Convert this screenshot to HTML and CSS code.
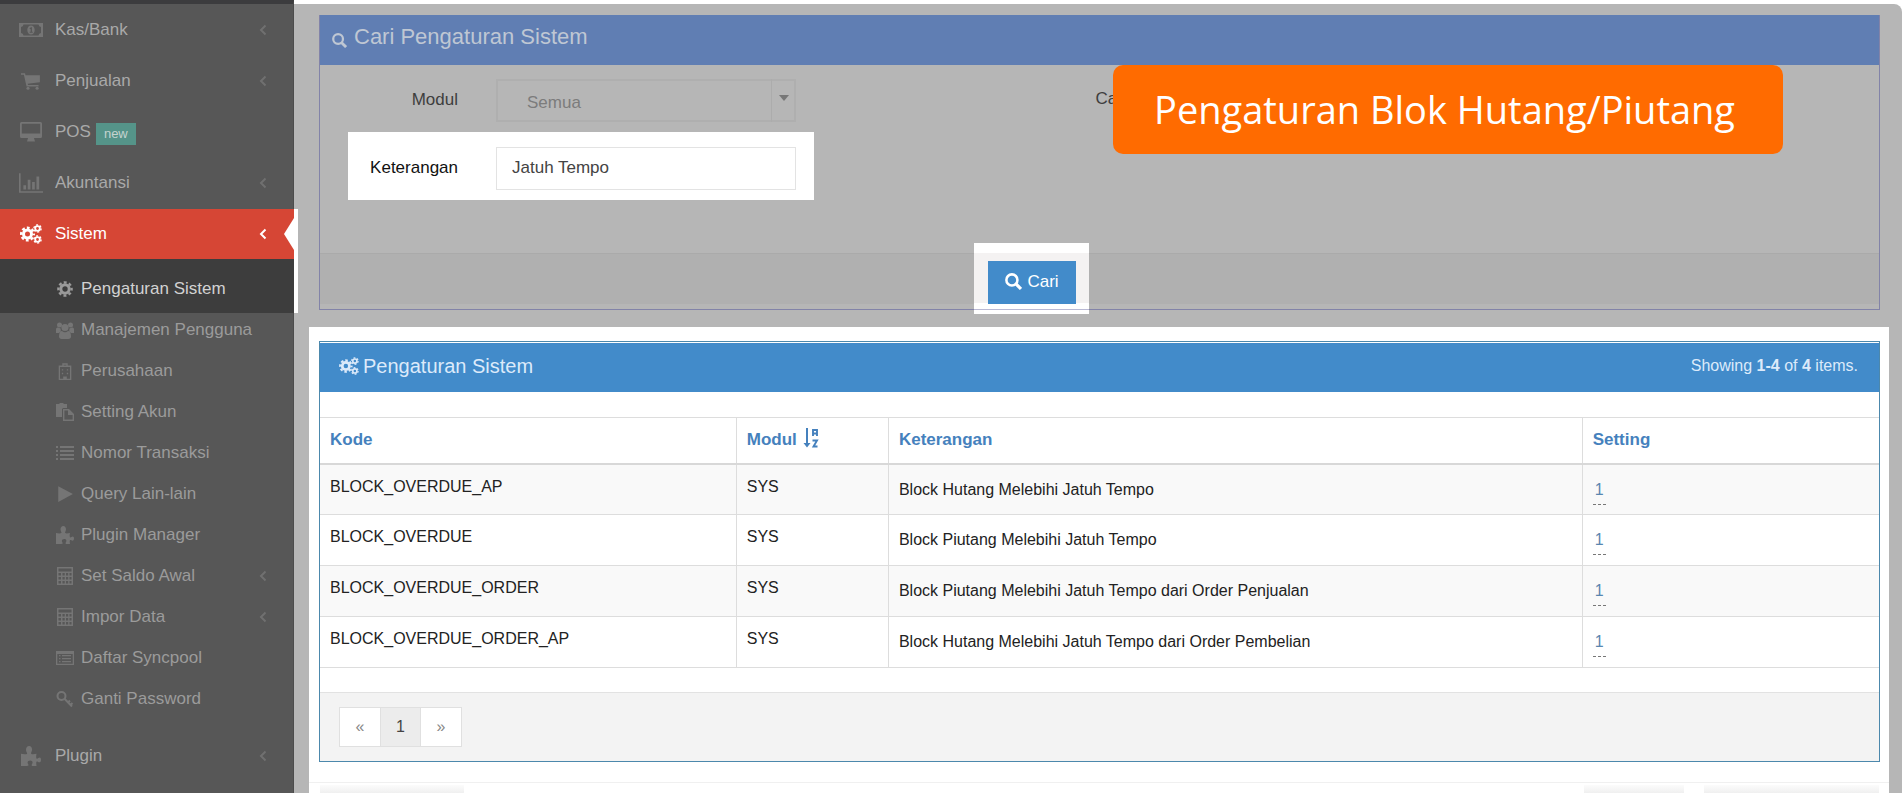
FILE: index.html
```html
<!DOCTYPE html>
<html lang="id">
<head>
<meta charset="utf-8">
<title>Pengaturan Sistem</title>
<link rel="stylesheet" href="styles.css">
</head>
<body>
<svg class="sprite" aria-hidden="true">
  <symbol id="i-money" viewBox="0 0 24 18"><path fill-rule="evenodd" d="M0 2h24v14H0zM2 6v6a3 3 0 0 1 2.500 2.500h15A3 3 0 0 1 22 12V6a3 3 0 0 1-2.500-2.500h-15A3 3 0 0 1 2 6z"/><path fill-rule="evenodd" d="M12 4.500c2.200 0 3.700 2 3.700 4.500s-1.500 4.500-3.700 4.500S8.300 11.500 8.300 9s1.500-4.500 3.700-4.500zM10.500 7.500l.6.700.6-.4v3h-1v1h3v-1h-.8V6.300h-1z"/></symbol>
  <symbol id="i-cart" viewBox="0 0 20 18"><path d="M1 2h3.600l.5 1.800H18v6.300L7 11.400l.3 1.200h9.500v1.300H6L3.600 3.400H1z"/><circle cx="7.300" cy="15.500" r="1.400"/><circle cx="15.500" cy="15.500" r="1.400"/></symbol>
  <symbol id="i-desktop" viewBox="0 0 22 20"><path fill-rule="evenodd" d="M1.500 0h19A1.500 1.500 0 0 1 22 1.500v13a1.500 1.500 0 0 1-1.500 1.500H14l1 3.500H7L8 16H1.500A1.500 1.500 0 0 1 0 14.500v-13A1.500 1.500 0 0 1 1.500 0zM1.800 1.800v9.700h18.400V1.800z"/></symbol>
  <symbol id="i-chart" viewBox="0 0 22 18"><path d="M0 0h1.500v16.500H22V18H0zM4 11h2.500v4H4zM8 6h2.500v9H8zM12 8h2.500v7H12zM16 3h2.500v12H16z"/></symbol>
  <symbol id="i-gear" viewBox="0 0 16 16"><g fill="none" stroke="currentColor"><circle cx="8" cy="8" r="4.200" stroke-width="3"/><circle cx="8" cy="8" r="6.600" stroke-width="2.400" stroke-dasharray="2.900 2.284" stroke-dashoffset="1.450"/></g></symbol>
  <symbol id="i-gears" viewBox="0 0 22 20"><g fill="none" stroke="currentColor"><circle cx="7.500" cy="10" r="4" stroke-width="3"/><circle cx="7.500" cy="10" r="6.300" stroke-width="2.400" stroke-dasharray="2.800 2.148" stroke-dashoffset="1.400"/><circle cx="17.500" cy="4.500" r="2.300" stroke-width="1.800"/><circle cx="17.500" cy="4.500" r="3.600" stroke-width="1.400" stroke-dasharray="2 1.770"/><circle cx="17.500" cy="15.500" r="2.300" stroke-width="1.800"/><circle cx="17.500" cy="15.500" r="3.600" stroke-width="1.400" stroke-dasharray="2 1.770"/></g></symbol>
  <symbol id="i-users" viewBox="0 0 18 18"><circle cx="3.500" cy="4" r="2.500"/><circle cx="14.500" cy="4" r="2.500"/><circle cx="9" cy="6.500" r="3.600"/><path d="M0 12V8.500C0 7 1 6.500 2 6.500l2.600 1L4.800 10 3 12zM18 12V8.500c0-1.500-1-2-2-2l-2.600 1-.2 2.500L15 12zM3 15.500c0-3.500 1-5.500 3-5.500 1 1 2 1.300 3 1.300s2-.3 3-1.300c2 0 3 2 3 5.500 0 1.500-1 2.500-2.500 2.500h-7C4 18 3 17 3 15.500z"/></symbol>
  <symbol id="i-building" viewBox="0 0 16 20"><path fill-rule="evenodd" d="M1 4h4V1.500h6V4h4v16H1zM2.500 5.500v13H6V16h4v2.500h3.500v-13zM6.500 3v1h3V3z"/><path d="M4.500 8H6v1.500H4.500zM10 8h1.500v1.500H10zM4.500 12H6v1.500H4.500zM10 12h1.500v1.500H10z"/></symbol>
  <symbol id="i-paste" viewBox="0 0 18 18"><path fill-rule="evenodd" d="M0 1h3.500V0h4v1H11v4H7.500A1.500 1.500 0 0 0 6 6.500V14H0z"/><path fill-rule="evenodd" d="M7 6h6l5 5v7H7zm1.400 1.400v9.200h8.200V12H12V7.400z"/></symbol>
  <symbol id="i-list" viewBox="0 0 18 16"><path d="M0 1h2v2H0zM4 1h14v2H4zM0 5h2v2H0zM4 5h14v2H4zM0 9h2v2H0zM4 9h14v2H4zM0 13h2v2H0zM4 13h14v2H4z"/></symbol>
  <symbol id="i-play" viewBox="0 0 16 16"><path d="M2 1l13 7-13 7z"/></symbol>
  <symbol id="i-puzzle" viewBox="0 0 18 18"><path d="M0 7c2 .5 4.500.6 5.300.1C6 6.600 4.500 5 4.500 3.300 4.500 1.500 5.700 0 7.300 0S10 1.500 10 3.200c0 1.800-1.500 3.100-.7 3.900.7.600 3.300.3 4.700-.1-.3 1.400-.6 3.600 0 4.200.8.700 1.700-.8 2.800-.8.900 0 1.200 1.100 1.200 2.100s-.5 2.200-1.400 2.200c-1.200 0-2-1.100-2.600-.5-.5.600-.2 2.600 0 3.800-1.600 0-3.500.3-4.200-.3-.8-.7.600-1.600.6-2.900 0-1-.9-1.700-2.200-1.700s-2.300.7-2.300 1.800c0 1.300 1.300 1.900.7 2.700-.6.700-4.300.4-6.600.4z"/></symbol>
  <symbol id="i-grid" viewBox="0 0 16 18"><path fill-rule="evenodd" d="M0 0h16v18H0zM1.500 1.500v3h13v-3zM1.500 6v2.500H4V6zm4 0v2.500H7.700V6zm3.500 0v2.500h2.200V6zm3.500 0v2.500h2V6zM1.500 10v2.500H4V10zm4 0v2.500H7.700V10zM9 10v2.500h2.200V10zm3.500 0v2.500h2V10zM1.500 14v2.500H4V14zm4 0v2.500H7.700V14zM9 14v2.500h2.200V14zm3.500 0v2.500h2V14z"/></symbol>
  <symbol id="i-listalt" viewBox="0 0 18 16"><path fill-rule="evenodd" d="M0 1h18v14H0zM1.300 4v9.700h15.400V4z"/><path d="M3 5h1.500v1.300H3zM6 5h9v1.300H6zM3 8h1.500v1.300H3zM6 8h9v1.300H6zM3 11h1.500v1.300H3zM6 11h9v1.300H6z"/></symbol>
  <symbol id="i-key" viewBox="0 0 18 18"><g fill="none" stroke="currentColor" stroke-width="2"><circle cx="5.500" cy="6" r="4"/><path d="M8.500 8.800L16 16.500M12 12.500l2-2M14.500 15l2-2"/></g></symbol>
  <symbol id="i-search" viewBox="0 0 16 16"><g fill="none" stroke="currentColor"><circle cx="6.500" cy="6.500" r="5.200" stroke-width="2.400"/><path d="M10.300 10.300l4.700 4.700" stroke-width="3"/></g></symbol>
  <symbol id="i-angle" viewBox="0 0 8 12"><path d="M6.500 1.500L2 6l4.500 4.500" fill="none" stroke="currentColor" stroke-width="2"/></symbol>
  <symbol id="i-sort" viewBox="0 0 16 20"><path d="M3 0h2v15h2.500L4 19.500.500 15H3z"/><g fill="none" stroke="currentColor" stroke-width="1.900"><path d="M10 8V2h4v6M10 5.500h4M9.500 12.500H14L10.500 18.500h4"/></g></symbol>
</svg>

<div class="page">
  <nav class="sidebar" aria-label="Menu">
    <ul class="menu">
      <li><a class="item" href="#"><svg class="icon lg"><use href="#i-money"/></svg><span>Kas/Bank</span><svg class="angle"><use href="#i-angle"/></svg></a></li>
      <li><a class="item" href="#"><svg class="icon lg"><use href="#i-cart"/></svg><span>Penjualan</span><svg class="angle"><use href="#i-angle"/></svg></a></li>
      <li><a class="item" href="#"><svg class="icon lg"><use href="#i-desktop"/></svg><span>POS</span><span class="badge">new</span></a></li>
      <li><a class="item" href="#"><svg class="icon lg"><use href="#i-chart"/></svg><span>Akuntansi</span><svg class="angle"><use href="#i-angle"/></svg></a></li>
      <li class="open">
        <a class="item active" href="#"><svg class="icon lg"><use href="#i-gears"/></svg><span>Sistem</span><svg class="angle"><use href="#i-angle"/></svg></a>
        <ul class="submenu">
          <li><a class="subitem current" href="#" aria-current="page"><svg class="icon"><use href="#i-gear"/></svg><span>Pengaturan Sistem</span></a></li>
          <li><a class="subitem" href="#"><svg class="icon"><use href="#i-users"/></svg><span>Manajemen Pengguna</span></a></li>
          <li><a class="subitem" href="#"><svg class="icon"><use href="#i-building"/></svg><span>Perusahaan</span></a></li>
          <li><a class="subitem" href="#"><svg class="icon"><use href="#i-paste"/></svg><span>Setting Akun</span></a></li>
          <li><a class="subitem" href="#"><svg class="icon"><use href="#i-list"/></svg><span>Nomor Transaksi</span></a></li>
          <li><a class="subitem" href="#"><svg class="icon"><use href="#i-play"/></svg><span>Query Lain-lain</span></a></li>
          <li><a class="subitem" href="#"><svg class="icon"><use href="#i-puzzle"/></svg><span>Plugin Manager</span></a></li>
          <li><a class="subitem" href="#"><svg class="icon"><use href="#i-grid"/></svg><span>Set Saldo Awal</span><svg class="angle"><use href="#i-angle"/></svg></a></li>
          <li><a class="subitem" href="#"><svg class="icon"><use href="#i-grid"/></svg><span>Impor Data</span><svg class="angle"><use href="#i-angle"/></svg></a></li>
          <li><a class="subitem" href="#"><svg class="icon"><use href="#i-listalt"/></svg><span>Daftar Syncpool</span></a></li>
          <li><a class="subitem" href="#"><svg class="icon"><use href="#i-key"/></svg><span>Ganti Password</span></a></li>
        </ul>
      </li>
      <li><a class="item" href="#"><svg class="icon lg"><use href="#i-puzzle"/></svg><span>Plugin</span><svg class="angle"><use href="#i-angle"/></svg></a></li>
    </ul>
  </nav>

  <main class="content">
    <section class="panel search">
      <h1 class="search-head"><svg class="search-icon"><use href="#i-search"/></svg>Cari Pengaturan Sistem</h1>
      <form>
        <div class="form-body">
          <div class="field">
            <label for="modul">Modul</label>
            <div class="select-wrap"><select id="modul"><option>Semua</option></select></div>
          </div>
          <span class="side-label">Ca</span>
          <div class="field focus">
            <label for="ket">Keterangan</label>
            <input id="ket" type="text" value="Jatuh Tempo">
          </div>
        </div>
        <div class="form-foot">
          <div class="spot"><button class="btn" type="submit"><svg><use href="#i-search"/></svg>Cari</button></div>
        </div>
      </form>
      <div class="banner">Pengaturan Blok Hutang/Piutang</div>
    </section>

    <div class="result">
      <section class="panel grid-panel">
        <header class="grid-head">
          <h2><svg><use href="#i-gears"/></svg>Pengaturan Sistem</h2>
          <p>Showing <b>1-4</b> of <b>4</b> items.</p>
        </header>
        <table>
          <colgroup><col class="c-kode"><col class="c-modul"><col class="c-ket"><col></colgroup>
          <thead>
            <tr><th><a href="#">Kode</a></th><th><a href="#">Modul <svg class="sort"><use href="#i-sort"/></svg></a></th><th><a href="#">Keterangan</a></th><th><a href="#">Setting</a></th></tr>
          </thead>
          <tbody>
            <tr><td>BLOCK_OVERDUE_AP</td><td>SYS</td><td class="low">Block Hutang Melebihi Jatuh Tempo</td><td class="val"><a href="#">1</a></td></tr>
            <tr><td>BLOCK_OVERDUE</td><td>SYS</td><td class="low">Block Piutang Melebihi Jatuh Tempo</td><td class="val"><a href="#">1</a></td></tr>
            <tr><td>BLOCK_OVERDUE_ORDER</td><td>SYS</td><td class="low">Block Piutang Melebihi Jatuh Tempo dari Order Penjualan</td><td class="val"><a href="#">1</a></td></tr>
            <tr><td>BLOCK_OVERDUE_ORDER_AP</td><td>SYS</td><td class="low">Block Hutang Melebihi Jatuh Tempo dari Order Pembelian</td><td class="val"><a href="#">1</a></td></tr>
          </tbody>
        </table>
        <footer class="grid-foot">
          <nav class="pager" aria-label="Halaman"><span>«</span><a class="on" href="#">1</a><span>»</span></nav>
        </footer>
      </section>
      <div class="bottom"><i class="blur a"></i><i class="blur b"></i><i class="blur c"></i></div>
    </div>
  </main>
</div>
</body>
</html>
```
FILE: styles.css
```css
* { box-sizing: border-box; }
body {
  margin: 0;
  background: #fff;
  font-family: "Liberation Sans", Arial, sans-serif;
  font-size: 17px;
  color: #222;
}
a { color: inherit; text-decoration: none; }
ul { list-style: none; margin: 0; padding: 0; }
h1, h2, p { margin: 0; font-weight: normal; }
svg { fill: currentColor; flex: none; }
.sprite { position: absolute; width: 0; height: 0; }
.page { display: flex; height: 100vh; overflow: hidden; }

/* Sidebar */
.sidebar {
  flex: 0 0 294px;
  background: #575757;
  border-top: 4px solid #3c3c3e;
  border-right: 1px solid #4c4c4c;
  color: #a9a9a9;
  position: relative;
  z-index: 1;
}
.menu { padding-top: 1px; }
.item, .subitem { display: flex; align-items: center; }
.item { height: 51px; padding: 0 26px 2px 19px; gap: 12px; }
.icon { width: 18px; height: 18px; color: #757575; }
.icon.lg { width: 24px; height: 20px; }
.angle { width: 8px; height: 12px; margin-left: auto; color: #707070; }
.badge {
  margin: 4px 0 0 -7px;
  padding: 0 8px;
  background: #559489;
  color: #c4d3cf;
  font-size: 13px;
  line-height: 22px;
}
.open { margin-right: -1px; position: relative; padding-bottom: 8px; }
.open::after {
  content: "";
  position: absolute;
  left: 100%;
  top: 0;
  width: 4px;
  height: 104px;
  background: #fff;
}
.item.active { height: 50px; background: #d64635; color: #fff; padding-right: 27px; padding-bottom: 0; position: relative; }
.item.active .icon, .item.active .angle { color: #fff; }
.item.active::after {
  content: "";
  position: absolute;
  right: 0;
  top: 9px;
  border: solid transparent;
  border-width: 16px 10px 16px 0;
  border-right-color: #fff;
}
.subitem { height: 41px; padding: 0 27px 7px 56px; gap: 7px; color: #9b9b9b; }
.subitem.current { height: 54px; padding-top: 6px; padding-bottom: 0; background: #3d3d3d; color: #d2d2d2; }
.subitem.current .icon { color: #9a9a9a; width: 16px; margin: 0 1px; }

/* Content */
.content {
  flex: 1;
  min-width: 0;
  margin: 4px 1px 0 0;
  padding: 11px 13px 0 15px;
  background: #b6b6b6;
  border-top-right-radius: 8px;
}
.panel { position: relative; }
.search { margin: 0 9px 17px 10px; border: 1px solid #8283a8; border-top: 0; }
.search-head {
  display: flex;
  align-items: center;
  gap: 7px;
  height: 50px;
  padding: 0 12px 6px;
  background: #607eb3;
  color: #bfc7d3;
  font-size: 22px;
}
.search-icon { width: 15px; height: 15px; margin-top: 6px; }
.form-body {
  display: grid;
  grid-template-columns: 466fr 282fr 784fr;
  row-gap: 10px;
  padding: 14px 0 53px 28px;
}
.field {
  display: grid;
  grid-template-columns: 110px 1fr;
  column-gap: 38px;
  align-items: center;
  padding-right: 18px;
  color: #3e3e3e;
}
.field label { text-align: right; padding-bottom: 2px; }
.field.focus { grid-column: 1; background: #fff; color: #111; padding-top: 15px; padding-bottom: 10px; }
.side-label { grid-column: 3; padding-top: 10px; color: #3e3e3e; }
.select-wrap { position: relative; }
.select-wrap::before {
  content: "";
  position: absolute;
  right: 24px;
  top: 0;
  bottom: 0;
  border-left: 1px solid #acacac;
}
.select-wrap::after {
  content: "";
  position: absolute;
  right: 7px;
  top: 16px;
  border: solid transparent;
  border-width: 6px 5px 0;
  border-top-color: #777;
}
select, input {
  display: block;
  width: 100%;
  height: 43px;
  font: inherit;
  margin: 0;
  border-radius: 0;
}
select { appearance: none; padding: 4px 29px 0; border: 2px solid #afafaf; background: transparent; color: #7c7c7c; opacity: 1; }
input { padding: 0 15px 1px; border: 1px solid #e3e3e3; background: #fff; color: #444; }
.form-foot {
  display: flex;
  justify-content: center;
  padding: 7px 0 5px;
  border-top: 1px solid #aaa;
  background: linear-gradient(to top, #b6b6b6 5px, #b0b0b0 5px);
}
.spot { position: relative; margin-left: -135px; }
.spot::before {
  content: "";
  position: absolute;
  inset: -18px -13px -10px -14px;
  background: linear-gradient(#fff 10px, #f4f2f2 10px, #f4f2f2 60px, #fff 60px, #fff 66px, #b9b9d4 66px, #b9b9d4 67px, #fff 67px);
}
.btn {
  position: relative;
  display: flex;
  align-items: center;
  gap: 5px;
  height: 43px;
  padding: 0 17px 2px;
  border: 0;
  background: #428bca;
  color: #fff;
  font: inherit;
}
.btn svg { width: 17px; height: 17px; }
.banner {
  position: absolute;
  top: 50px;
  right: 96px;
  padding: 0 48px 1px 41px;
  border-radius: 10px;
  background: #ff6b00;
  color: #fff;
  font: 38px/88px "Open Sans", sans-serif;
  white-space: nowrap;
}

/* Result grid */
.result { background: #fff; padding: 14px 9px 0 10px; min-height: 100%; }
.grid-panel { border: 1px solid #4c88ac; }
.grid-head {
  display: flex;
  align-items: center;
  justify-content: space-between;
  height: 49px;
  margin-top: 1px;
  padding: 0 21px 3px 19px;
  background: #428bca;
  color: #dceafa;
  font-size: 16px;
}
.grid-head h2 { display: flex; align-items: center; gap: 4px; font-size: 20px; }
.grid-head h2 svg { width: 20px; height: 18px; }
table { width: 100%; margin: 25px 0 24px; border-collapse: collapse; table-layout: fixed; font-size: 16px; }
.c-kode { width: 26.7%; }
.c-modul { width: 9.76%; }
.c-ket { width: 44.5%; }
th, td { border: 1px solid #ddd; padding: 10px; text-align: left; vertical-align: top; line-height: 24px; }
th:first-child, td:first-child { border-left: 0; }
th:last-child, td:last-child { border-right: 0; }
th { height: 46px; font-size: 17px; color: #4581bd; border-bottom: 2px solid #d8d8d8; }
td { height: 51px; }
tbody tr:nth-child(odd) { background: #f9f9f9; }
td.low { padding-top: 13px; }
td.val { padding-top: 11px; padding-bottom: 0; }
td.val a { display: inline-block; padding: 0 2px; line-height: 28px; border-bottom: 1px dashed #777; color: #5a86b0; }
.sort { width: 16px; height: 20px; margin-left: 1px; vertical-align: -3px; }
.grid-foot { padding: 14px 19px; border-top: 1px solid #e2e2e2; background: #f3f3f3; }
.pager { display: inline-flex; border: 1px solid #e0e0e0; background: #fff; color: #888; vertical-align: top; font-size: 16px; }
.pager > * { width: 40px; line-height: 38px; text-align: center; }
.pager .on { width: 41px; background: #ececec; color: #444; border: solid #e0e0e0; border-width: 0 1px; }
.bottom {
  display: flex;
  gap: 20px;
  margin: 20px -9px 0 -10px;
  padding: 2px 10px 0 11px;
  border-top: 1px solid #f0f0f0;
}
.blur { height: 12px; background: linear-gradient(#fcfcfc, #e9e9e9); }
.blur.a { width: 144px; margin-right: auto; }
.blur.b { width: 100px; }
.blur.c { width: 175px; }
```
